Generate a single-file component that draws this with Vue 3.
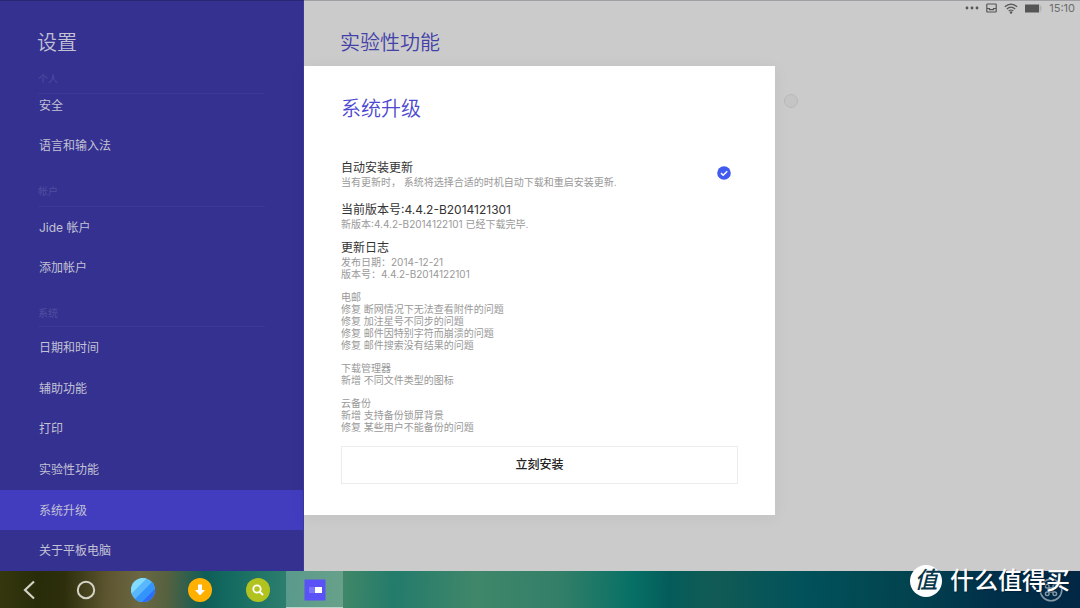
<script setup>
import { ref } from 'vue'

const groups = [
  { label: '个人', key: 'personal', items: ['安全', '语言和输入法'] },
  { label: '帐户', key: 'account', items: ['Jide 帐户', '添加帐户'] },
  { label: '系统', key: 'system', items: ['日期和时间', '辅助功能', '打印', '实验性功能', '系统升级', '关于平板电脑'] },
]
const current = ref('系统升级')
const autoInstall = ref(true)

const changelog = [
  ['发布日期：2014-12-21', '版本号：4.4.2-B2014122101'],
  ['电邮', '修复 断网情况下无法查看附件的问题', '修复 加注星号不同步的问题', '修复 邮件因特别字符而崩溃的问题', '修复 邮件搜索没有结果的问题'],
  ['下载管理器', '新增 不同文件类型的图标'],
  ['云备份', '新增 支持备份锁屏背景', '修复 某些用户不能备份的问题'],
]
</script>

<template>
  <div class="screen">
    <div class="settings">
      <aside class="sidebar">
        <h1>设置</h1>
        <nav>
          <section v-for="g in groups" :key="g.key" :class="['group', g.key]">
            <h2>{{ g.label }}</h2>
            <ul>
              <li v-for="item in g.items" :key="item">
                <a href="#" :class="{ active: item === current }" @click.prevent="current = item">{{ item }}</a>
              </li>
            </ul>
          </section>
        </nav>
      </aside>

      <main class="panel">
        <header class="panel-head">
          <h2>实验性功能</h2>
          <div class="status">
            <svg width="14" height="10" viewBox="0 0 14 10"><g fill="#555"><circle cx="2" cy="5" r="1.4" /><circle cx="7" cy="5" r="1.4" /><circle cx="12" cy="5" r="1.4" /></g></svg>
            <svg width="11" height="10" viewBox="0 0 11 10"><path d="M1.5 1h8q.7 0 .7.7v6.6q0 .7-.7.7h-8q-.7 0-.7-.7V1.700Q.8 1 1.500 1zM.8 5.500h2.700v1.200h4V5.500h2.700" fill="none" stroke="#555" stroke-width="1.200" /></svg>
            <svg width="14" height="11" viewBox="0 0 14 11"><g fill="none" stroke="#555" stroke-width="1.200"><path d="M.8 3.800Q7-1.600 13.200 3.800" /><path d="M2.800 6Q7 2.200 11.200 6" /><path d="M4.700 8Q7 6 9.300 8" /></g><circle cx="7" cy="9.500" r="1.200" fill="#555" /></svg>
            <svg width="17" height="9" viewBox="0 0 17 9"><path d="M0 .5h14v8H0z" fill="#555" /><path d="M14.500 .5h1v2h1v4h-1v2h-1z" fill="#b0b0b0" /></svg>
            <time>15:10</time>
          </div>
        </header>

        <div class="stage">
          <section class="dialog" role="dialog" aria-labelledby="dialog-title">
            <h2 id="dialog-title">系统升级</h2>
            <label class="auto">
              <span class="texts">
                <strong>自动安装更新</strong>
                <small>当有更新时， 系统将选择合适的时机自动下载和重启安装更新.</small>
              </span>
              <span class="check">
                <input v-model="autoInstall" type="checkbox" />
                <svg v-if="autoInstall" width="14" height="14" viewBox="0 0 14 14"><circle cx="7" cy="7" r="6.800" fill="#415bf0" /><path d="M4 7.100l2.200 2.100 4-4" fill="none" stroke="#fff" stroke-width="1.500" /></svg>
              </span>
            </label>
            <div class="version texts">
              <strong>当前版本号:4.4.2-B2014121301</strong>
              <small>新版本:4.4.2-B2014122101 已经下载完毕.</small>
            </div>
            <h3>更新日志</h3>
            <div class="log">
              <div v-for="(block, i) in changelog" :key="i">
                <p v-for="line in block" :key="line">{{ line }}</p>
              </div>
            </div>
            <button class="install" type="button">立刻安装</button>
          </section>
          <input class="option" type="radio" aria-label="实验性功能" />
        </div>
      </main>
    </div>

    <footer class="taskbar">
      <div class="apps">
        <button type="button" aria-label="返回"><svg width="24" height="24" viewBox="0 0 24 24"><path d="M17 3.500L8 12l9 8.500" fill="none" stroke="#d3d3c6" stroke-width="2.200" /></svg></button>
        <button type="button" aria-label="主页"><svg width="24" height="24" viewBox="0 0 24 24"><circle cx="12" cy="12" r="8.200" fill="none" stroke="#d3d3c6" stroke-width="2" /></svg></button>
        <button type="button" aria-label="浏览器">
          <svg width="24" height="24" viewBox="0 0 24 24">
            <defs><clipPath id="disc"><circle cx="12" cy="12" r="12" /></clipPath></defs>
            <g clip-path="url(#disc)"><path d="M0 0h24v24H0z" fill="#58b8fb" /><path d="M0 0h16L0 16z" fill="#83dcfd" /><path d="M24 1v23H1z" fill="#3394fc" /><path d="M24 11v13H11z" fill="#2c6cf8" /></g>
          </svg>
        </button>
        <button type="button" aria-label="下载"><svg width="24" height="24" viewBox="0 0 24 24"><circle cx="12" cy="12" r="12" fill="#ffb000" /><path d="M10 6.500h4V12h3l-5 5.500L7 12h3z" fill="#fff" /></svg></button>
        <button type="button" aria-label="搜索"><svg width="24" height="24" viewBox="0 0 24 24"><circle cx="12" cy="12" r="12" fill="#b2c31f" /><circle cx="11" cy="11" r="3.700" fill="none" stroke="#fff" stroke-width="1.800" /><path d="M13.600 13.600l3.400 3.400" stroke="#fff" stroke-width="2" /></svg></button>
        <button class="running" type="button" aria-label="设置"><svg width="22" height="22" viewBox="0 0 22 22"><path d="M.5.500h21v21H.5z" fill="#5a52f6" /><path d="M5 8h6v6H5z" fill="#7b75fa" /><path d="M11 8h7v6h-7z" fill="#fff" /></svg></button>
      </div>
      <button class="command" type="button" aria-label="快捷键">
        <svg width="24" height="24" viewBox="0 0 24 24"><g fill="none" stroke="#8497a5"><circle cx="12" cy="12" r="10.800" stroke-width="1.600" /><path d="M10 10h4v4h-4zM10 10H8.200A1.800 1.800 0 1 1 10 8.200zM14 10V8.200A1.800 1.800 0 1 1 15.800 10zM14 14h1.800A1.800 1.800 0 1 1 14 15.800zM10 14v1.800A1.800 1.800 0 1 1 8.200 14z" stroke-width="1.400" /></g></svg>
      </button>
    </footer>

    <div class="brand"><span class="seal">值</span><span>什么值得买</span></div>
  </div>
</template>

<style>
body { margin: 0; }
</style>

<style scoped>
.screen {
  position: relative;
  display: flex;
  flex-direction: column;
  min-height: 100vh;
  background: #cbcbcb;
  font-family: Inter, "Noto Sans CJK SC", sans-serif;
  font-size: 12px;
}
.screen * { box-sizing: border-box; }
h1, h2, h3, p, ul { margin: 0; padding: 0; font-weight: 400; }
ul { list-style: none; }
svg { display: block; }
button { padding: 0; border: 0; background: none; font: inherit; }

.settings {
  flex: 1;
  display: grid;
  grid-template-columns: 28.15% 1fr;
  box-shadow: inset 0 1px #a0a0a4;
}

.sidebar {
  display: flex;
  flex-direction: column;
  background: #343190;
  border-top: 1px solid #292774;
  border-right: 1px solid #3d3a9c;
  color: #c3c2d5;
}
.sidebar h1 {
  padding: 27px 37px 0;
  font-size: 20px;
  line-height: 30px;
  font-weight: 350;
}
nav { flex: 1; display: flex; flex-direction: column; }
.group h2 {
  height: 40px;
  margin: 0 38px;
  padding-top: 18px;
  border-bottom: 1px solid #3d3a96;
  color: #514e9f;
  font-size: 10px;
  line-height: 16px;
}
.personal h2 { height: 36px; padding-top: 13px; }
.personal ul { margin-top: -9px; }
.account h2 { height: 42px; }
.group a {
  display: flex;
  align-items: center;
  height: 40px;
  padding: 0 39px 2px;
  color: inherit;
  text-decoration: none;
}
.system { flex: 1; display: flex; flex-direction: column; }
.system ul { flex: 1; display: flex; flex-direction: column; }
.system li { flex: 1; display: flex; }
.system a { flex: 1; height: auto; }
.group a.active { background: #423dbf; }

.panel { display: flex; flex-direction: column; min-width: 0; }
.panel-head {
  display: flex;
  justify-content: space-between;
  align-items: flex-start;
  height: 66px;
  padding: 0 5px 0 36px;
}
.panel-head h2 {
  padding-top: 28px;
  color: #4340a8;
  font-size: 20px;
  line-height: 30px;
  font-weight: 350;
}
.status {
  display: flex;
  align-items: center;
  gap: 7px;
  height: 16px;
  color: #6c6c6c;
  font-size: 11px;
}
.stage { display: flex; align-items: flex-start; }
.dialog {
  width: 60.7%;
  padding: 28px 37px 31px;
  background: #fff;
  box-shadow: 0 2px 16px rgba(0, 0, 0, .05);
  color: #333;
}
.dialog h2 {
  margin-bottom: 37px;
  color: #4c48cf;
  font-size: 20px;
  line-height: 30px;
  font-weight: 350;
}
.auto { display: flex; justify-content: space-between; padding-right: 7px; }
.texts strong, .texts small { display: block; white-space: nowrap; }
.texts strong, .dialog h3 { font-size: 12px; line-height: 14px; font-weight: 400; }
.texts small { font-size: 10px; line-height: 14px; color: #999; }
.check { display: grid; align-items: center; height: 24px; }
.check > * { grid-area: 1 / 1; }
.check input {
  appearance: none;
  width: 14px;
  height: 14px;
  margin: 0;
  border: 1px solid #bbb;
  border-radius: 50%;
}
.check input:checked { border-color: transparent; }
.version { margin-top: 14px; }
.dialog h3 { margin: 10px 0 1px; }
.log { display: grid; gap: 11px; color: #999; font-size: 10px; line-height: 12px; }
.install {
  display: block;
  width: 100%;
  height: 38px;
  margin-top: 13px;
  padding-bottom: 3px;
  border: 1px solid #ececec;
  color: #222;
  font-weight: 500;
}
.option {
  appearance: none;
  width: 14px;
  height: 14px;
  margin: 28px 9px;
  border: 1px solid #b8b8b8;
  border-radius: 50%;
  background: #c5c5c5;
}

.taskbar {
  display: flex;
  justify-content: space-between;
  height: 37px;
  background: linear-gradient(92deg, #35380e 0%, #282c09 3.500%, #2d2f0c 6%, #5d5530 10%, #6b6843 13%, #56613f 15.500%, #0e5e58 19%, #13695f 21%, #2a7d6d 26%, #3f8768 32%, #237b6b 36.500%, #40876a 44%, #327f68 52%, #077066 58.500%, #045c5a 62%, #125b55 66%, #01525a 74%, #02434f 84%, #01304a 92%, #012744 100%);
}
.apps {
  display: grid;
  grid-template-columns: repeat(6, 1fr);
  width: 31.8%;
}
.apps button { display: flex; align-items: center; justify-content: center; }
.apps .running { background: rgba(255, 255, 255, .22); box-shadow: inset 0 -1px #b5d5c8; }
.command { padding: 1px 17px 0 0; }

.brand {
  position: absolute;
  right: 10px;
  bottom: 11px;
  display: flex;
  align-items: center;
  gap: 8px;
  color: #fff;
  font-size: 24px;
  line-height: 32px;
  font-weight: 500;
  text-shadow: 1px 1px 1px rgba(0, 20, 40, .5);
}
.seal {
  width: 32px;
  height: 32px;
  border-radius: 50%;
  background: #fff;
  color: #07374a;
  font-size: 23px;
  font-weight: 500;
  font-style: italic;
  text-align: center;
  line-height: 30px;
  text-shadow: none;
}
</style>
